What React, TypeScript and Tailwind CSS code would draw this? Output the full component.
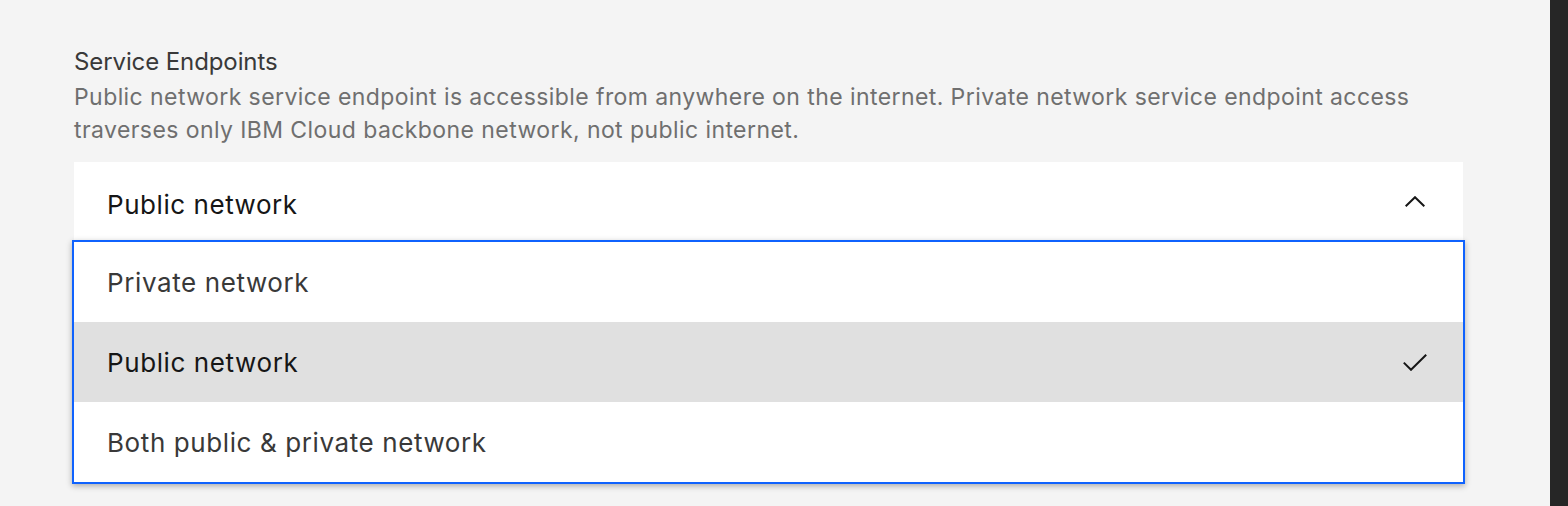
import React from "react";

const options = [
    { label: "Private network", selected: false },
    { label: "Public network", selected: true },
    { label: "Both public & private network", selected: false },
];

export default function App() {
    return (
        <div className="flex h-[506px] w-full overflow-hidden" style={{ fontFamily: "Inter, 'Noto Sans', sans-serif" }}>
            <div className="flex-1 bg-[#f4f4f4] pl-[74px] pr-[87px] pt-[47px]">
                <div className="text-[24px] leading-[30px] text-[#393939] tracking-[-0.1px]">Service Endpoints</div>
                <p className="mt-[4px] whitespace-nowrap text-[23px] leading-[33px] text-[#6f6f6f] tracking-[0.42px]">
                    Public network service endpoint is accessible from anywhere on the internet. Private network service endpoint access
                    <br />
                    traverses only IBM Cloud backbone network, not public internet.
                </p>
                <div className="relative mt-[15px]">
                    <div className="flex h-[78px] items-center justify-between bg-white pl-[33px] pr-[38px]">
                        <span className="pt-[6px] text-[26px] tracking-[0.55px] text-[#161616]">Public network</span>
                        <svg width="20" height="11" viewBox="0 0 20 11" fill="none">
                            <path d="M0.7 10.3L10 1.2L19.3 10.3" stroke="#161616" strokeWidth="2" />
                        </svg>
                    </div>
                    <div className="absolute left-[-2px] right-[-2px] top-full border-2 border-[#0f62fe] bg-white shadow-[0_2px_6px_rgba(0,0,0,0.3)]">
                        {options.map((o, i) => (
                            <div
                                key={i}
                                className={
                                    "flex h-[80px] items-center justify-between pl-[33px] pr-[36px] " +
                                    (o.selected ? "bg-[#e0e0e0] text-[#161616]" : "text-[#393939]")
                                }
                            >
                                <span className="text-[26px] tracking-[0.6px]">{o.label}</span>
                                {o.selected && (
                                    <svg width="24" height="17" viewBox="0 0 24 17" fill="none">
                                        <path d="M0.8 8.6L8 15.8L23.2 0.8" stroke="#161616" strokeWidth="2" />
                                    </svg>
                                )}
                            </div>
                        ))}
                    </div>
                </div>
            </div>
            <div className="w-[18px] bg-[#262626]" />
        </div>
    );
}
